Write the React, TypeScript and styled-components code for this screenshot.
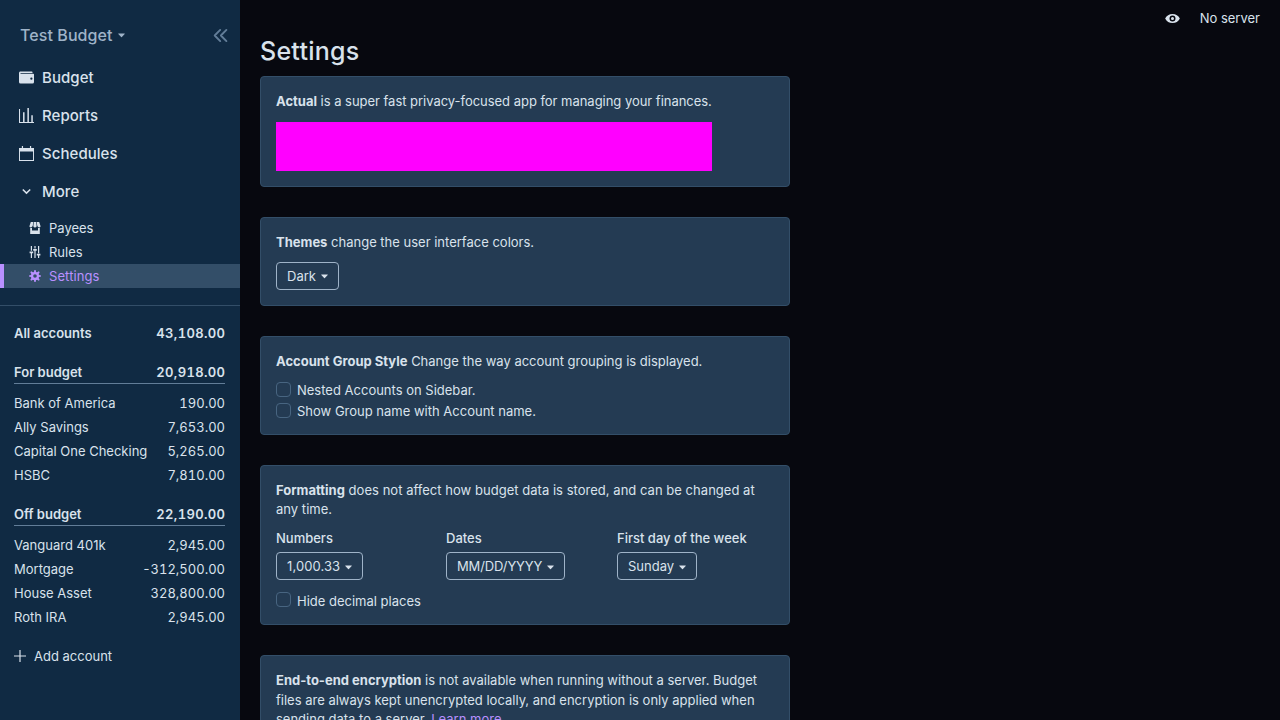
import React from 'react';
import styled, { createGlobalStyle } from 'styled-components';

const c = {
  page: '#07080f',
  sidebar: '#102a43',
  card: '#243b53',
  line: '#334e68',
  text: '#d9e2ec',
  muted: '#9fb3c8',
  dim: '#627d98',
  accent: '#b990ff',
};

const GlobalStyle = createGlobalStyle`
  * { box-sizing: border-box; }
  html, body { margin: 0; height: 100%; overflow: hidden; background: ${c.page}; }
  body { font-family: Inter, "Liberation Sans", sans-serif; font-size: 13px; color: ${c.text}; }
  button, input { font: inherit; color: inherit; }
`;

const Shell = styled.div`
  display: flex;
  height: 100vh;
  overflow: hidden;
`;

const Sidebar = styled.aside`
  width: 240px;
  flex-shrink: 0;
  background: ${c.sidebar};
`;

const BudgetHeader = styled.header`
  display: flex;
  align-items: center;
  justify-content: space-between;
  height: 58px;
  padding: 13px 12px 0 20px;
`;

const BudgetName = styled.button`
  display: flex;
  align-items: center;
  gap: 5px;
  padding: 0;
  margin-bottom: 2px;
  border: 0;
  background: none;
  font-size: 16px;
  font-weight: 500;
  letter-spacing: 0.08px;
  color: ${c.muted};
`;

const CollapseButton = styled.button`
  display: flex;
  padding: 0;
  border: 0;
  background: none;
  color: ${c.dim};
`;

const NavItem = styled.a`
  display: flex;
  align-items: center;
  gap: 8px;
  height: 38px;
  padding-left: 19px;
  font-size: 15px;
  font-weight: 500;
  letter-spacing: 0.05px;
`;

const IconSlot = styled.span`
  display: flex;
  justify-content: center;
  width: 15px;
`;

const SubNav = styled.div`
  padding: 6px 0 17px;
  border-bottom: 1px solid ${c.line};
`;

const SubItem = styled.a<{ $active?: boolean }>`
  display: flex;
  align-items: center;
  gap: 8px;
  height: 24px;
  padding-left: 25px;
  border-left: 4px solid ${p => (p.$active ? c.accent : 'transparent')};
  background: ${p => (p.$active ? c.line : 'transparent')};
  color: ${p => (p.$active ? c.accent : c.text)};
  letter-spacing: ${p => (p.$active ? '0.1px' : '0')};
`;

const Accounts = styled.div`
  display: flex;
  flex-direction: column;
  padding: 15px 15px 0 14px;
`;

const AccountRow = styled.div`
  display: flex;
  align-items: center;
  justify-content: space-between;
  height: 24px;
`;

const Amount = styled.span`
  font-feature-settings: 'tnum';
`;

const TotalRow = styled(AccountRow)`
  font-weight: 600;
  ${Amount} {
    letter-spacing: 0.35px;
    margin-right: -0.35px;
  }
`;

const GroupRow = styled(TotalRow)`
  margin: 15px 0 7px;
  border-bottom: 1px solid ${c.dim};
`;

const AddAccount = styled.button`
  display: flex;
  align-items: center;
  gap: 8px;
  height: 24px;
  margin-top: 15px;
  padding: 0;
  border: 0;
  background: none;
`;

const Main = styled.main`
  flex: 1;
  min-width: 0;
`;

const TopBar = styled.div`
  display: flex;
  align-items: center;
  justify-content: flex-end;
  gap: 20px;
  height: 36px;
  padding-right: 20px;
`;

const Content = styled.div`
  display: flex;
  flex-direction: column;
  width: 570px;
  padding: 0 20px;
`;

const Title = styled.h1`
  margin: 0;
  height: 40px;
  line-height: 30px;
  font-size: 25px;
  font-weight: 500;
  letter-spacing: 0.25px;
`;

const Card = styled.section<{ $height: number }>`
  height: ${p => p.$height}px;
  margin-bottom: 30px;
  padding: 15px;
  border: 1px solid ${c.line};
  border-radius: 4px;
  background: ${c.card};
`;

const Copy = styled.p<{ $gap?: number; $leading?: number; $track?: number }>`
  margin: 0 0 ${p => p.$gap ?? 10}px;
  line-height: ${p => p.$leading ?? 19.5}px;
  letter-spacing: ${p => p.$track ?? 0}px;
  strong { font-weight: 700; letter-spacing: 0; }
`;

const Banner = styled.div`
  width: 436px;
  height: 49px;
  background: #ff00ff;
`;

const Select = styled.button<{ $track?: number }>`
  display: flex;
  align-items: center;
  gap: 5px;
  height: 28px;
  padding: 0 10px;
  border: 1px solid ${c.muted};
  border-radius: 4px;
  background: none;
  letter-spacing: ${p => p.$track ?? 0}px;
`;

const Fields = styled.div`
  display: grid;
  grid-template-columns: 160px 161px 1fr;
  gap: 10px;
  margin-bottom: 10px;
`;

const Field = styled.div`
  display: flex;
  flex-direction: column;
  align-items: flex-start;
  gap: 4px;
`;

const FieldLabel = styled.label`
  line-height: 19px;
  font-weight: 500;
`;

const Option = styled.label`
  display: flex;
  align-items: center;
  gap: 6px;
  height: 21px;
`;

const Checkbox = styled.input.attrs({ type: 'checkbox' })`
  appearance: none;
  width: 15px;
  height: 15px;
  margin: 0 0 2px;
  border: 1px solid #486581;
  border-radius: 4px;
`;

const Link = styled.a`
  color: ${c.accent};
`;

const CaretIcon = styled.svg`
  margin-top: 2px;
`;

const paths = {
  wallet:
    'M0 4c0-1.1.9-2 2-2h15a1 1 0 0 1 1 1v1H2v1h17a1 1 0 0 1 1 1v10a2 2 0 0 1-2 2H2a2 2 0 0 1-2-2V4zm16.5 9a1.5 1.5 0 1 0 0-3 1.5 1.5 0 0 0 0 3z',
  reports:
    'M0 1.3h1.4v17.4H20V20H0zM5.4 5.5h2v13h-2zM11.2 0h2v18.5h-2zM16.4 9.5h2v9h-2z',
  calendar:
    'M0 2.7h3.8V0h1.6v2.7h9.2V0h1.6v2.7H20V20H0zM1.3 7.2v11.5h17.4V7.2z',
  chevron:
    'M9.293 12.95l.707.707L15.657 8l-1.414-1.414L10 10.828 5.757 6.586 4.343 8z',
  store:
    'M18 9.87V20H2V9.87a4.25 4.25 0 0 0 3-.38V14h10V9.5a4.26 4.26 0 0 0 3 .37zM3 0h4l-.67 6.03A3.43 3.43 0 0 1 3 9C1.34 9 .42 7.73.95 6.15L3 0zm5 0h4l.7 6.3c.17 1.5-.91 2.7-2.42 2.7h-.56A2.38 2.38 0 0 1 7.3 6.3L8 0zm5 0h4l2.05 6.15C19.58 7.73 18.65 9 17 9a3.42 3.42 0 0 1-3.33-2.97L13 0z',
  tuning:
    'M17 16v4h-2v-4h-2v-3h6v3h-2zM1 9h6v3H1V9zm6-4h6v3H7V5zM3 0h2v8H3V0zm12 0h2v12h-2V0zM9 0h2v4H9V0zM3 12h2v8H3v-8zm6-4h2v12H9V8z',
  cog:
    'M3.94 6.5L2.22 3.64l1.42-1.42L6.5 3.94c.52-.3 1.1-.54 1.7-.7L9 0h2l.8 3.24c.6.16 1.18.4 1.7.7l2.86-1.72 1.42 1.42-1.72 2.86c.3.52.54 1.1.7 1.7L20 9v2l-3.24.8c-.16.6-.4 1.18-.7 1.7l1.72 2.86-1.42 1.42-2.86-1.72c-.52.3-1.1.54-1.7.7L11 20H9l-.8-3.24c-.6-.16-1.18-.4-1.7-.7l-2.86 1.72-1.42-1.42 1.72-2.86c-.3-.52-.54-1.1-.7-1.7L0 11V9l3.24-.8c.16-.6.4-1.18.7-1.7zM10 13a3 3 0 1 0 0-6 3 3 0 0 0 0 6z',
  eye:
    'M.2 10a11 11 0 0 1 19.6 0A11 11 0 0 1 .2 10zm9.8 4a4 4 0 1 0 0-8 4 4 0 0 0 0 8zm0-2a2 2 0 1 1 0-4 2 2 0 0 1 0 4z',
  plus: 'M9 0h2v9h9v2h-9v9H9v-9H0V9h9z',
};

function Icon({ name, size }: { name: keyof typeof paths; size: number }) {
  return (
    <svg width={size} height={size} viewBox="0 0 20 20" fill="currentColor">
      <path d={paths[name]} fillRule="evenodd" />
    </svg>
  );
}

function Caret() {
  return (
    <CaretIcon width="7" height="7" viewBox="0 0 7 7" fill="currentColor">
      <path d="M.5 1.5h6q.5 0 .2.5L3.9 5.1q-.4.4-.8 0L.3 2Q0 1.5.5 1.5z" />
    </CaretIcon>
  );
}

const budgetAccounts = [
  ['Bank of America', '190.00'],
  ['Ally Savings', '7,653.00'],
  ['Capital One Checking', '5,265.00'],
  ['HSBC', '7,810.00'],
];

const offBudgetAccounts = [
  ['Vanguard 401k', '2,945.00'],
  ['Mortgage', '-312,500.00'],
  ['House Asset', '328,800.00'],
  ['Roth IRA', '2,945.00'],
];

function AccountGroup({ name, total, rows }: { name: string; total: string; rows: string[][] }) {
  return (
    <>
      <GroupRow>
        {name}
        <Amount>{total}</Amount>
      </GroupRow>
      {rows.map(([label, amount]) => (
        <AccountRow key={label}>
          {label}
          <Amount>{amount}</Amount>
        </AccountRow>
      ))}
    </>
  );
}

const formats = [
  { label: 'Numbers', value: '1,000.33', track: 0.1 },
  { label: 'Dates', value: 'MM/DD/YYYY', track: -0.12 },
  { label: 'First day of the week', value: 'Sunday', track: 0 },
];

export default function App() {
  return (
    <Shell>
      <GlobalStyle />
      <Sidebar>
        <BudgetHeader>
          <BudgetName>
            Test Budget <Caret />
          </BudgetName>
          <CollapseButton aria-label="Collapse sidebar">
            <svg width="15" height="15" viewBox="0 0 15 15" fill="none" stroke="currentColor" strokeWidth="1.9" strokeLinecap="round" strokeLinejoin="round">
              <path d="M7.2 1.9L1.7 7.5l5.5 5.6M13.4 1.9L7.9 7.5l5.5 5.6" />
            </svg>
          </CollapseButton>
        </BudgetHeader>
        <nav>
          <NavItem><IconSlot><Icon name="wallet" size={15} /></IconSlot>Budget</NavItem>
          <NavItem><IconSlot><Icon name="reports" size={15} /></IconSlot>Reports</NavItem>
          <NavItem><IconSlot><Icon name="calendar" size={15} /></IconSlot>Schedules</NavItem>
          <NavItem><IconSlot><Icon name="chevron" size={15} /></IconSlot>More</NavItem>
          <SubNav>
            <SubItem><Icon name="store" size={12} />Payees</SubItem>
            <SubItem><Icon name="tuning" size={12} />Rules</SubItem>
            <SubItem $active><Icon name="cog" size={12} />Settings</SubItem>
          </SubNav>
        </nav>
        <Accounts>
          <TotalRow>
            All accounts
            <Amount>43,108.00</Amount>
          </TotalRow>
          <AccountGroup name="For budget" total="20,918.00" rows={budgetAccounts} />
          <AccountGroup name="Off budget" total="22,190.00" rows={offBudgetAccounts} />
          <AddAccount>
            <Icon name="plus" size={12} />
            Add account
          </AddAccount>
        </Accounts>
      </Sidebar>
      <Main>
        <TopBar>
          <Icon name="eye" size={15} />
          <span>No server</span>
        </TopBar>
        <Content>
          <Title>Settings</Title>
          <Card $height={111}>
            <Copy $track={-0.03}><strong>Actual</strong> is a super fast privacy-focused app for managing your finances.</Copy>
            <Banner />
          </Card>
          <Card $height={89}>
            <Copy $gap={9}><strong>Themes</strong> change the user interface colors.</Copy>
            <Select>Dark <Caret /></Select>
          </Card>
          <Card $height={99}>
            <Copy $gap={8}><strong>Account Group Style</strong> Change the way account grouping is displayed.</Copy>
            <Option><Checkbox />Nested Accounts on Sidebar.</Option>
            <Option><Checkbox />Show Group name with Account name.</Option>
          </Card>
          <Card $height={160}>
            <Copy $leading={19} $track={0.03}><strong>Formatting</strong> does not affect how budget data is stored, and can be changed at any time.</Copy>
            <Fields>
              {formats.map(({ label, value, track }) => (
                <Field key={label}>
                  <FieldLabel>{label}</FieldLabel>
                  <Select $track={track}>{value} <Caret /></Select>
                </Field>
              ))}
            </Fields>
            <Option><Checkbox />Hide decimal places</Option>
          </Card>
          <Card $height={111}>
            <Copy>
              <strong>End-to-end encryption</strong> is not available when running without a server. Budget files are always
              kept unencrypted locally, and encryption is only applied when sending data to a server.{' '}
              <Link>Learn more…</Link>
            </Copy>
          </Card>
        </Content>
      </Main>
    </Shell>
  );
}
